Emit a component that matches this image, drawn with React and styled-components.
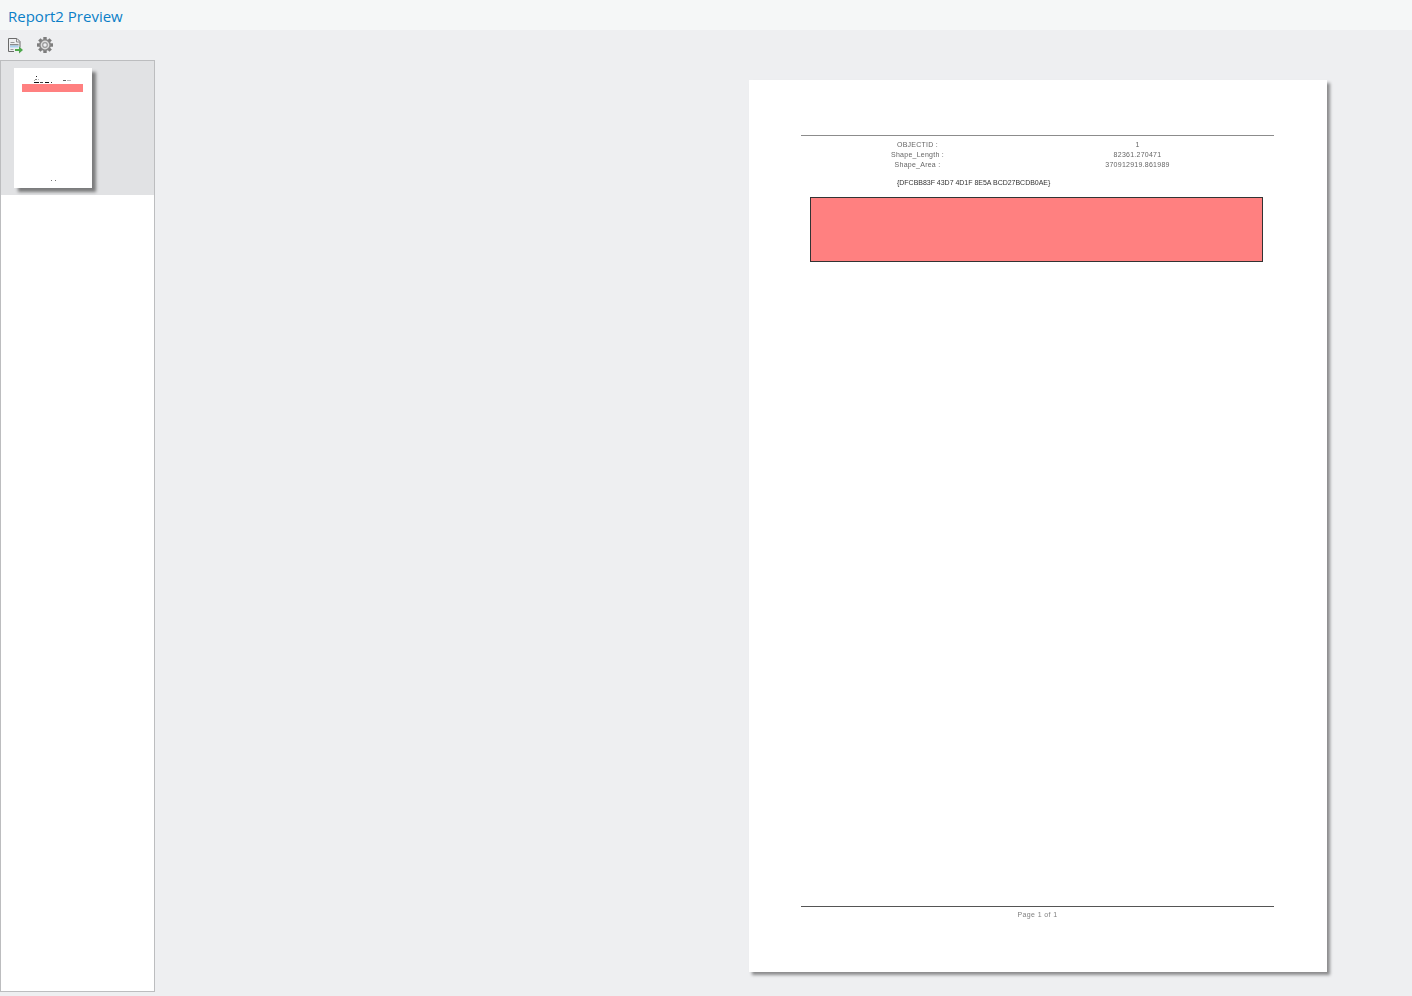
import styled, { createGlobalStyle } from 'styled-components'

const GlobalStyle = createGlobalStyle`
  html, body {
    margin: 0;
    padding: 0;
    height: 100%;
    background: #eeeff1;
    overflow: hidden;
  }
`

const fields = [
  { label: 'OBJECTID :', value: '1' },
  { label: 'Shape_Length :', value: '82361.270471' },
  { label: 'Shape_Area :', value: '370912919.861989' },
]

const gearTeeth = [0, 45, 90, 135, 180, 225, 270, 315]

const ExportIcon = () => (
  <svg width="18" height="18" viewBox="0 0 18 18" fill="none">
    <path d="M8 15.500H2.500V2.500h8.500l3 3v6" stroke="#6a6a6a" strokeWidth="1" />
    <path d="M10.500 2.500v3.500h3.500" stroke="#8c8c8c" strokeWidth="1" />
    <path d="M4.500 6.500h4" stroke="#9a9a9a" strokeWidth="1" />
    <rect x="4" y="8" width="8.500" height="1.500" fill="#8a8a8a" />
    <rect x="4" y="9.500" width="8.500" height="2" fill="#a9d2ef" />
    <path d="M4.500 13.500h3" stroke="#9a9a9a" strokeWidth="1" />
    <path d="M9 13h4v-2.500l4 3.500-4 3.500V15H9z" fill="#4ea84c" />
  </svg>
)

const GearIcon = () => (
  <svg width="18" height="18" viewBox="0 0 18 18" fill="none">
    {gearTeeth.map((angle) => (
      <rect key={angle} x="7.300" y="1" width="3.400" height="4" fill="#7d7d7d" transform={`rotate(${angle} 9 9)`} />
    ))}
    <circle cx="9" cy="9" r="5.200" fill="#dcdcdc" stroke="#858585" strokeWidth="1.600" />
    <circle cx="9" cy="9" r="2.300" fill="#eeeff1" stroke="#9a9a9a" strokeWidth="1.200" />
  </svg>
)

const ThumbnailContent = () => (
  <svg width="78" height="120" viewBox="0 0 78 120">
    <rect x="8" y="16" width="61" height="8" fill="#ff8080" />
    <rect x="22" y="8" width="1" height="1" fill="#222" />
    <rect x="21" y="11" width="2" height="1" fill="#888" />
    <rect x="24" y="11" width="1" height="1" fill="#bbb" />
    <rect x="20" y="12" width="1" height="1" fill="#aaa" />
    <rect x="49" y="12" width="3" height="1" fill="#666" />
    <rect x="53" y="12" width="4" height="1" fill="#bbb" />
    <rect x="20" y="14" width="5" height="1" fill="#111" />
    <rect x="26" y="14" width="3" height="1" fill="#444" />
    <rect x="31" y="14" width="4" height="1" fill="#111" />
    <rect x="37" y="14" width="1" height="1" fill="#333" />
    <rect x="37" y="112" width="1" height="1" fill="#777" />
    <rect x="41" y="112" width="1" height="1" fill="#777" />
  </svg>
)

const App = () => (
  <>
    <GlobalStyle />
    <Shell>
      <TitleBar>Report2 Preview</TitleBar>
      <Toolbar>
        <ToolButton aria-label="Export"><ExportIcon /></ToolButton>
        <ToolButton aria-label="Settings"><GearIcon /></ToolButton>
      </Toolbar>
      <Workspace>
        <Sidebar>
          <ThumbSlot>
            <Thumbnail><ThumbnailContent /></Thumbnail>
          </ThumbSlot>
        </Sidebar>
        <Viewer>
          <Page>
            <Rule />
            <Fields>
              {fields.map((field) => (
                <FieldRow key={field.label}>
                  <span>{field.label}</span>
                  <span>{field.value}</span>
                </FieldRow>
              ))}
            </Fields>
            <Guid>{'{DFCBB83F 43D7 4D1F 8E5A BCD27BCDB0AE}'}</Guid>
            <Swatch />
            <Footer>
              <Rule $dark />
              <PageNumber>Page 1 of 1</PageNumber>
            </Footer>
          </Page>
        </Viewer>
      </Workspace>
    </Shell>
  </>
)

const Shell = styled.div`
  display: flex;
  flex-direction: column;
  height: 996px;
  background: #eeeff1;
`

const TitleBar = styled.div`
  height: 30px;
  box-sizing: border-box;
  padding: 5px 0 0 8px;
  background: #f5f7f7;
  color: #0b7fc7;
  font-family: 'Open Sans', sans-serif;
  font-size: 15px;
  line-height: 22px;
`

const Toolbar = styled.div`
  height: 30px;
  display: flex;
  align-items: center;
  gap: 12px;
  padding-left: 6px;
`

const ToolButton = styled.div`
  width: 18px;
  height: 18px;
  display: flex;
`

const Workspace = styled.div`
  display: flex;
  height: 932px;
`

const Sidebar = styled.div`
  width: 155px;
  box-sizing: border-box;
  background: #fff;
  border: 1px solid #bcbdbf;
`

const ThumbSlot = styled.div`
  height: 134px;
  box-sizing: border-box;
  padding: 7px 0 0 13px;
  background: #e1e2e4;
`

const Thumbnail = styled.div`
  width: 78px;
  height: 120px;
  display: flex;
  background: #fff;
  box-shadow: 4px 4px 3px rgba(0, 0, 0, 0.45);
`

const Viewer = styled.div`
  flex: 1;
  padding: 20px 0 0 594px;
`

const Page = styled.div`
  width: 578px;
  height: 892px;
  box-sizing: border-box;
  padding: 55px 53px 0 52px;
  display: flex;
  flex-direction: column;
  background: #fff;
  box-shadow: 3px 3px 3px rgba(0, 0, 0, 0.42);
  font-family: 'Liberation Sans', Arial, sans-serif;
  font-size: 7px;
  color: #666;
`

const Rule = styled.div`
  height: 1px;
  background: ${(props) => (props.$dark ? '#555' : '#8c8c8c')};
`

const Fields = styled.div`
  padding-top: 4px;
  display: flex;
  flex-direction: column;
  filter: blur(0.25px);
`

const FieldRow = styled.div`
  display: grid;
  grid-template-columns: 233px 207px;
  height: 10px;
  line-height: 10px;
  text-align: center;
  letter-spacing: 0.25px;
`

const Guid = styled.div`
  margin-top: 8px;
  padding-left: 96px;
  line-height: 10px;
  color: #333;
  letter-spacing: -0.02px;
  filter: blur(0.25px);
`

const Swatch = styled.div`
  margin: 9px 11px 0 9px;
  height: 65px;
  box-sizing: border-box;
  background: #ff8080;
  border: 1px solid #333;
`

const Footer = styled.div`
  margin-top: 644px;
`

const PageNumber = styled.div`
  padding-top: 3px;
  line-height: 9px;
  text-align: center;
  color: #808080;
  letter-spacing: 0.4px;
  filter: blur(0.25px);
`

export default App
